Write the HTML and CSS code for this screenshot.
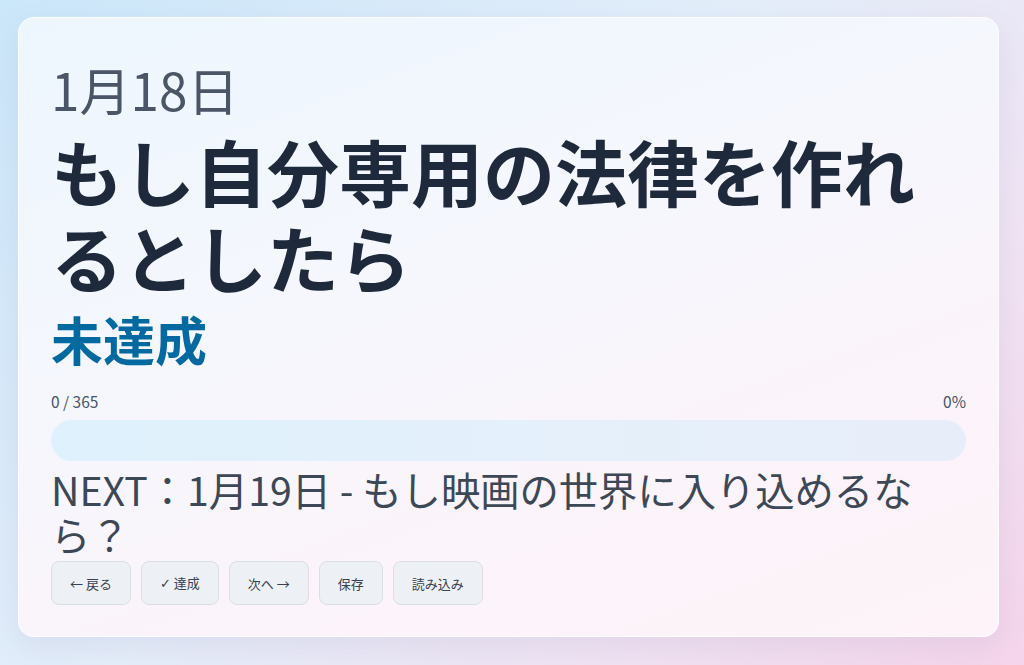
FILE: index.html
```html
<!DOCTYPE html>
<html lang="ja">
<head>
<meta charset="utf-8">
<title>1月18日</title>
<link rel="stylesheet" href="styles.css">
</head>
<body>
<main class="card">
  <div class="date">1月18日</div>
  <h1 class="title">もし自分専用の法律を作れるとしたら</h1>
  <div class="status">未達成</div>
  <div class="stats"><span>0 / 365</span><span>0%</span></div>
  <div class="bar"><div class="bar-fill" style="width:0%"></div></div>
  <p class="next">NEXT：1月19日 - もし映画の世界に入り込めるなら？</p>
  <div class="actions">
    <button class="btn">← 戻る</button>
    <button class="btn"><span class="check">✓</span> 達成</button>
    <button class="btn">次へ →</button>
    <button class="btn">保存</button>
    <button class="btn">読み込み</button>
  </div>
</main>
</body>
</html>
```

FILE: styles.css
```css
* { box-sizing: border-box; }
html, body { margin: 0; height: 665px; }
body {
  font-family: "Noto Sans CJK JP", "Noto Sans", sans-serif;
  background: linear-gradient(135deg, #cbe7fa 0%, #e4eefa 45%, #f0e3f3 75%, #f5d5eb 100%);
  padding: 17px 25px 28px 18px;
  overflow: hidden;
}
.card {
  height: 620px;
  border-radius: 16px;
  border: 1px solid rgba(255,255,255,0.7);
  background: linear-gradient(160deg, #edf6fe 0%, #f5f7fd 40%, #fbf4fa 70%, #fdf3f9 100%);
  box-shadow: 0 10px 30px rgba(120, 110, 160, 0.12);
  padding: 42px 32px 0 32px;
  display: flex;
  flex-direction: column;
}
.date {
  font-size: 51.2px;
  line-height: 58px;
  color: #4a5568;
}
.title {
  margin: 9px 0 0;
  font-size: 72px;
  line-height: 1.2;
  font-weight: 700;
  color: #1e293b;
}
.status {
  margin-top: 8px;
  font-size: 52px;
  line-height: 1.2;
  font-weight: 700;
  color: #0369a1;
}
.stats {
  margin-top: 22px;
  display: flex;
  justify-content: space-between;
  font-size: 15.5px;
  line-height: 18px;
  color: #475569;
}
.bar {
  margin-top: 10px;
  height: 41px;
  border-radius: 999px;
  background: linear-gradient(90deg, #def1fc 0%, #e4f0fb 50%, #e8eef9 100%);
  overflow: hidden;
}
.bar-fill {
  height: 100%;
  background: #0ea5e9;
}
.next {
  margin: 5px 0 0;
  font-size: 39.3px;
  line-height: 45px;
  color: #3d4856;
}
.actions {
  margin-top: 5px;
  display: flex;
  gap: 10px;
}
.btn {
  font-family: "Noto Sans CJK JP", "Noto Sans", sans-serif;
  font-size: 13px;
  line-height: 17px;
  padding: 12px 18px;
  border: 1px solid #dadfe5;
  border-radius: 8px;
  background: #edf0f4;
  color: #374151;
}
.check {
  font-family: "DejaVu Sans", sans-serif;
}
```
